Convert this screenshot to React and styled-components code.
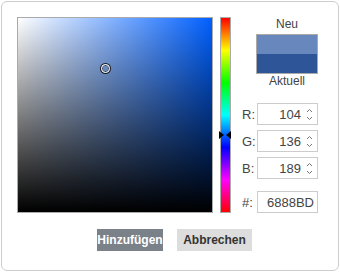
import React, { useState } from 'react';
import styled, { createGlobalStyle } from 'styled-components';

const GlobalStyle = createGlobalStyle`
  body {
    margin: 0;
    background: #ffffff;
    font-family: 'Liberation Sans', Arial, sans-serif;
  }
`;

const toHex = (n) => n.toString(16).padStart(2, '0').toUpperCase();

const rgbToHsv = (r, g, b) => {
  const max = Math.max(r, g, b);
  const min = Math.min(r, g, b);
  const d = max - min;
  let h = 0;
  if (d !== 0) {
    if (max === r) h = ((g - b) / d) % 6;
    else if (max === g) h = (b - r) / d + 2;
    else h = (r - g) / d + 4;
    h *= 60;
    if (h < 0) h += 360;
  }
  return { h, s: max === 0 ? 0 : d / max, v: max / 255 };
};

const Chevron = ({ up }) => (
  <svg width="7" height="5" viewBox="0 0 7 5">
    <path
      d={up ? 'M1 4 L3.5 1.5 L6 4' : 'M1 1 L3.5 3.5 L6 1'}
      fill="none"
      stroke="#777"
      strokeWidth="1"
    />
  </svg>
);

const NumberField = ({ label, value }) => (
  <Row>
    <Label>{label}</Label>
    <Field>
      <FieldText>{value}</FieldText>
      <Spinner>
        <Chevron up />
        <Chevron />
      </Spinner>
    </Field>
  </Row>
);

const ColorPicker = () => {
  const [rgb] = useState({ r: 104, g: 136, b: 189 });
  const current = '#2E5598';
  const { h, s, v } = rgbToHsv(rgb.r, rgb.g, rgb.b);
  const hex = toHex(rgb.r) + toHex(rgb.g) + toHex(rgb.b);

  return (
    <Panel>
      <TopRow>
        <SatBox hue={h}>
          <Cursor style={{ left: `${s * 194}px`, top: `${(1 - v) * 194}px` }} />
        </SatBox>
        <HueWrap>
          <HueBar />
          <ArrowLeft style={{ top: `${(h / 360) * 196}px` }} />
          <ArrowRight style={{ top: `${(h / 360) * 196}px` }} />
        </HueWrap>
        <Side>
          <Caption>Neu</Caption>
          <Swatch>
            <SwatchHalf color={`#${hex}`} />
            <SwatchHalf color={current} />
          </Swatch>
          <Caption>Aktuell</Caption>
          <Fields>
            <NumberField label="R:" value={rgb.r} />
            <NumberField label="G:" value={rgb.g} />
            <NumberField label="B:" value={rgb.b} />
          </Fields>
          <HexRow>
            <Label>#:</Label>
            <Field>
              <FieldText>{hex}</FieldText>
            </Field>
          </HexRow>
        </Side>
      </TopRow>
      <Buttons>
        <Button primary>Hinzufügen</Button>
        <Button>Abbrechen</Button>
      </Buttons>
    </Panel>
  );
};

const Panel = styled.div`
  box-sizing: border-box;
  margin: 1px 0 0 1px;
  width: 338px;
  height: 270px;
  border: 1px solid #cccccc;
  border-radius: 6px;
  padding: 15px;
  background: #ffffff;
`;

const TopRow = styled.div`
  display: flex;
  flex-direction: row;
  height: 196px;
`;

const SatBox = styled.div`
  position: relative;
  box-sizing: border-box;
  width: 196px;
  height: 196px;
  border: 1px solid #aaaaaa;
  background: linear-gradient(to top, #000000, rgba(0, 0, 0, 0)),
    linear-gradient(to right, #ffffff, hsl(${(p) => p.hue}, 100%, 50%));
`;

const Cursor = styled.div`
  position: absolute;
  box-sizing: border-box;
  width: 9px;
  height: 9px;
  margin: -4.5px 0 0 -4.5px;
  border-radius: 50%;
  border: 1px solid #ffffff;
  box-shadow: 0 0 0 1px #1a1a1a, inset 0 0 0 0.5px #1a1a1a;
`;

const HueWrap = styled.div`
  position: relative;
  margin-left: 7px;
  width: 11px;
  height: 196px;
`;

const HueBar = styled.div`
  box-sizing: border-box;
  width: 11px;
  height: 196px;
  border: 1px solid #aaaaaa;
  background: linear-gradient(
    to bottom,
    #ff0000,
    #ffff00,
    #00ff00,
    #00ffff,
    #0000ff,
    #ff00ff,
    #ff0000
  );
`;

const ArrowLeft = styled.div`
  position: absolute;
  left: -1px;
  width: 0;
  height: 0;
  margin-top: -4px;
  border-top: 4px solid transparent;
  border-bottom: 4px solid transparent;
  border-left: 5px solid #000000;
`;

const ArrowRight = styled.div`
  position: absolute;
  left: 6px;
  width: 0;
  height: 0;
  margin-top: -4px;
  border-top: 4px solid transparent;
  border-bottom: 4px solid transparent;
  border-right: 5px solid #000000;
`;

const Side = styled.div`
  display: flex;
  flex-direction: column;
  align-items: flex-end;
  margin-left: 11px;
  width: 76px;
`;

const Caption = styled.div`
  width: 62px;
  height: 15px;
  line-height: 15px;
  text-align: center;
  font-size: 12px;
  color: #444444;
`;

const Swatch = styled.div`
  box-sizing: border-box;
  display: flex;
  flex-direction: column;
  width: 62px;
  height: 40px;
  margin: 2px 0 0;
  border: 1px solid #aaaaaa;
`;

const SwatchHalf = styled.div`
  flex: 1;
  background: ${(p) => p.color};
`;

const Fields = styled.div`
  display: flex;
  flex-direction: column;
  gap: 5px;
  margin-top: 14px;
  width: 76px;
`;

const Row = styled.div`
  display: flex;
  flex-direction: row;
  align-items: center;
  width: 76px;
`;

const HexRow = styled(Row)`
  margin-top: auto;
`;

const Label = styled.div`
  width: 15px;
  font-size: 13px;
  color: #444444;
`;

const Field = styled.div`
  box-sizing: border-box;
  display: flex;
  flex-direction: row;
  align-items: center;
  width: 61px;
  height: 22px;
  border: 1px solid #cccccc;
  background: #ffffff;
  padding: 0 3px 0 4px;
`;

const FieldText = styled.div`
  flex: 1;
  text-align: right;
  font-size: 13px;
  color: #444444;
`;

const Spinner = styled.div`
  display: flex;
  flex-direction: column;
  gap: 3px;
  margin-left: 5px;
  width: 8px;
`;

const Buttons = styled.div`
  display: flex;
  flex-direction: row;
  justify-content: center;
  gap: 14px;
  margin-top: 16px;
  padding-left: 9px;
`;

const Button = styled.button`
  box-sizing: border-box;
  width: ${(p) => (p.primary ? '66px' : '75px')};
  height: 22px;
  padding: 0;
  border: none;
  border-radius: 0;
  background: ${(p) => (p.primary ? '#7b8189' : '#dddddd')};
  color: ${(p) => (p.primary ? '#ffffff' : '#333333')};
  font-family: 'Liberation Sans', Arial, sans-serif;
  font-size: 12px;
  font-weight: bold;
  cursor: pointer;
`;

export default function App() {
  return (
    <>
      <GlobalStyle />
      <ColorPicker />
    </>
  );
}
